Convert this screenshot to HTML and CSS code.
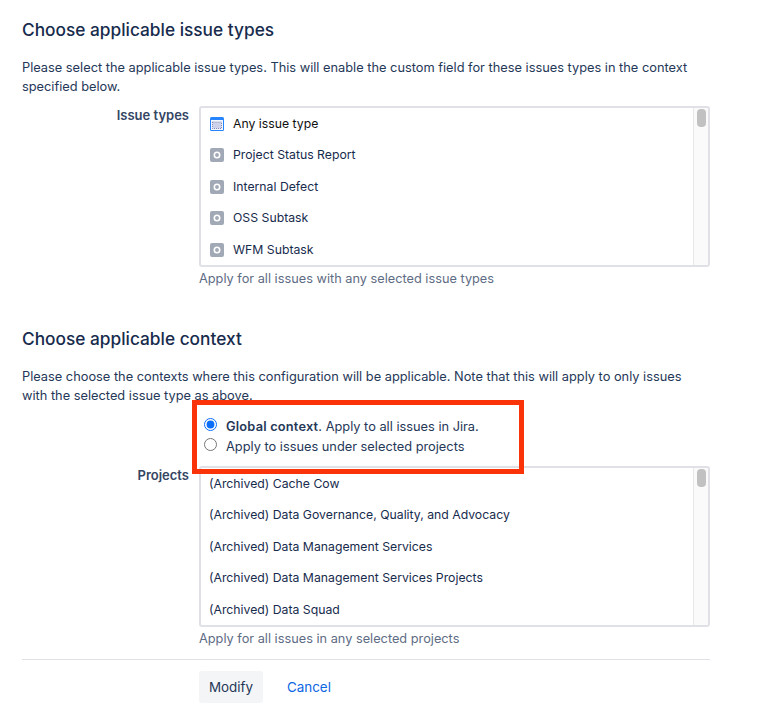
FILE: index.html
```html
<!DOCTYPE html>
<html lang="en">
<head>
<meta charset="utf-8">
<title>Configure custom field context</title>
<link rel="stylesheet" href="styles.css">
</head>
<body>
<main class="page">
  <h2 class="heading">Choose applicable issue types</h2>
  <p class="desc">Please select the applicable issue types. This will enable the custom field for these issues types in the context specified below.</p>
  <div class="field">
    <div class="label">Issue types</div>
    <div class="control">
      <div class="listbox">
        <ul class="options">
          <li class="option option-any"><svg class="icon" viewBox="0 0 14 14"><rect width="14" height="14" rx="1.5" fill="#2684ff"/><rect x="1" y="3" width="12" height="10" fill="#f4f7ff"/><rect x="2.5" y="5" width="9" height="6.5" fill="#cdd2ea" stroke="#5a6796" stroke-width=".7" stroke-dasharray="1 1"/></svg>Any issue type</li>
          <li class="option"><svg class="icon" viewBox="0 0 14 14"><rect width="14" height="14" rx="2" fill="#a0a9b5"/><circle cx="7" cy="7" r="2.7" fill="none" stroke="#fff" stroke-width="1.6"/></svg>Project Status Report</li>
          <li class="option"><svg class="icon" viewBox="0 0 14 14"><rect width="14" height="14" rx="2" fill="#a0a9b5"/><circle cx="7" cy="7" r="2.7" fill="none" stroke="#fff" stroke-width="1.6"/></svg>Internal Defect</li>
          <li class="option"><svg class="icon" viewBox="0 0 14 14"><rect width="14" height="14" rx="2" fill="#a0a9b5"/><circle cx="7" cy="7" r="2.7" fill="none" stroke="#fff" stroke-width="1.6"/></svg>OSS Subtask</li>
          <li class="option"><svg class="icon" viewBox="0 0 14 14"><rect width="14" height="14" rx="2" fill="#a0a9b5"/><circle cx="7" cy="7" r="2.7" fill="none" stroke="#fff" stroke-width="1.6"/></svg>WFM Subtask</li>
        </ul>
        <div class="scrollbar"><div class="thumb"></div></div>
      </div>
      <div class="hint">Apply for all issues with any selected issue types</div>
    </div>
  </div>

  <h2 class="heading heading-second">Choose applicable context</h2>
  <p class="desc desc-second">Please choose the contexts where this configuration will be applicable. Note that this will apply to only issues with the selected issue type as above.</p>
  <div class="radios">
    <label class="radio-row"><input class="radio" type="radio" name="ctx" checked><span><b>Global context</b>. Apply to all issues in Jira.</span></label>
    <label class="radio-row"><input class="radio" type="radio" name="ctx"><span>Apply to issues under selected projects</span></label>
    <div class="highlight"></div>
  </div>
  <div class="field">
    <div class="label">Projects</div>
    <div class="control">
      <div class="listbox">
        <ul class="options">
          <li class="option">(Archived) Cache Cow</li>
          <li class="option">(Archived) Data Governance, Quality, and Advocacy</li>
          <li class="option">(Archived) Data Management Services</li>
          <li class="option">(Archived) Data Management Services Projects</li>
          <li class="option">(Archived) Data Squad</li>
        </ul>
        <div class="scrollbar"><div class="thumb"></div></div>
      </div>
      <div class="hint">Apply for all issues in any selected projects</div>
    </div>
  </div>
  <div class="actions">
    <button class="btn" type="button">Modify</button>
    <a class="cancel" href="#">Cancel</a>
  </div>
</main>
</body>
</html>
```
FILE: styles.css
```css
* { box-sizing: border-box; }
html, body { margin: 0; padding: 0; background: #fff; }
body {
  font-family: Inter, "Liberation Sans", sans-serif;
  font-size: 12.8px;
  line-height: 20px;
  color: #172b4d;
  overflow: hidden;
}
.page { width: 688px; margin-left: 22px; padding-top: 19px; }
.heading {
  margin: 0;
  font-size: 17.3px;
  font-weight: 500;
  line-height: 22px;
  color: #172b4d;
}
.heading-second { margin-top: 39px; }
.desc { margin: 17px 0 10px; line-height: 19px; color: #253858; }
.desc-second { margin: 18px 0 0; line-height: 18.5px; }
.field { display: flex; }
.label {
  width: 167px;
  flex: none;
  margin-top: -1px;
  text-align: right;
  font-size: 13px;
  font-weight: 600;
  color: #344563;
}
.control { margin-left: 10px; flex: 1; min-width: 0; }
.listbox {
  display: flex;
  height: 161px;
  border: 2px solid #dfe1e6;
  border-radius: 3px;
  overflow: hidden;
}
.options { flex: 1; margin: 0; padding: 0; list-style: none; }
.option {
  display: flex;
  align-items: center;
  height: 31.5px;
  padding-left: 8px;
  font-size: 12.25px;
  color: #172b4d;
}
.option-any { color: #111; }
.icon { width: 14px; height: 14px; margin: 0 9px 0 1px; flex: none; }
.scrollbar {
  width: 15px;
  flex: none;
  background: #fafafa;
  border-left: 1px solid #e8e8e8;
  padding: 1px 2px 0 3px;
}
.thumb { height: 18px; border-radius: 4px; background: #c1c1c1; }
.hint { margin-top: 2px; font-size: 12.75px; color: #5e6c84; }
.radios {
  position: relative;
  margin-left: 177px;
  padding-top: 11.5px;
  height: 61px;
}
.radio-row { display: flex; align-items: center; height: 20px; padding-left: 5px; color: #253858; }
.radio { width: 13px; height: 13px; margin: 0 9px 4px 0; accent-color: #0b6ef9; }
.radio-row b { font-weight: 600; letter-spacing: .2px; }
.highlight {
  position: absolute;
  left: -7px;
  top: -5px;
  width: 332px;
  height: 74px;
  border: 5px solid #fb3309;
  z-index: 2;
  pointer-events: none;
}
.actions {
  display: flex;
  align-items: center;
  margin-top: 10px;
  padding: 11px 0 0 177px;
  border-top: 1px solid #dfe1e6;
}
.btn {
  height: 32px;
  width: 64px;
  border: 0;
  border-radius: 3px;
  background: #f4f5f7;
  color: #253858;
  font: inherit;
  font-size: 13.4px;
}
.cancel { margin-left: 24px; color: #0b66e4; text-decoration: none; font-size: 13.4px; }
```
